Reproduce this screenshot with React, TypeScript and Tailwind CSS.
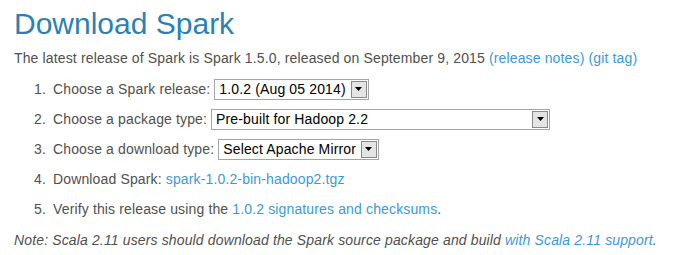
const Select = ({ value, width }: { value: string; width?: string }) => {
  return (
    <div
      className={`ml-[4px] flex h-[21px] items-center justify-between border border-[#a5a5a5] bg-white pl-[4px] pr-[1px] text-[14px] text-black ${width ?? ""}`}
    >
      <span className="mr-[5px] whitespace-nowrap leading-none">{value}</span>
      <span className="flex h-[17px] w-[16px] items-center justify-center border border-[#8a8a8a] bg-[#e4e4e4]">
        <svg width="7" height="4" viewBox="0 0 7 4">
          <path d="M0 0h7L3.5 4z" fill="#000" />
        </svg>
      </span>
    </div>
  );
};

const Link = ({ children }: { children: React.ReactNode }) => (
  <a href="#" className="text-[#3a9ad9]">
    {children}
  </a>
);

const App = () => {
  const steps: { n: string; content: React.ReactNode }[] = [
    {
      n: "1.",
      content: (
        <>
          <span>Choose a Spark release:</span>
          <Select value="1.0.2 (Aug 05 2014)" />
        </>
      ),
    },
    {
      n: "2.",
      content: (
        <>
          <span>Choose a package type:</span>
          <Select value="Pre-built for Hadoop 2.2" width="w-[339px]" />
        </>
      ),
    },
    {
      n: "3.",
      content: (
        <>
          <span>Choose a download type:</span>
          <Select value="Select Apache Mirror" />
        </>
      ),
    },
    {
      n: "4.",
      content: (
        <span>
          Download Spark: <Link>spark-1.0.2-bin-hadoop2.tgz</Link>
        </span>
      ),
    },
    {
      n: "5.",
      content: (
        <span>
          Verify this release using the <Link>1.0.2 signatures and checksums</Link>.
        </span>
      ),
    },
  ];

  return (
    <div className="min-h-screen bg-white px-[14px] pt-[7px] font-['Liberation_Sans',Arial,sans-serif] text-[14px] leading-[20px] tracking-[0.14px] text-[#505050]">
      {/** Heading **/}
      <h1 className="text-[30px] leading-[33px] tracking-normal text-[#2d7fb5]">Download Spark</h1>

      <p className="mt-[8px] whitespace-nowrap">
        The latest release of Spark is Spark 1.5.0, released on September 9, 2015{" "}
        <Link>(release notes)</Link> <Link>(git tag)</Link>
      </p>

      {/** Steps **/}
      <ol className="mt-[6px] pl-[20px]">
        {steps.map((step) => (
          <li key={step.n} className="flex h-[30px] items-center">
            <span className="w-[19px]">{step.n}</span>
            {step.content}
          </li>
        ))}
      </ol>

      <p className="mt-[6px] whitespace-nowrap italic">
        Note: Scala 2.11 users should download the Spark source package and build{" "}
        <Link>with Scala 2.11 support</Link>.
      </p>
    </div>
  );
};

export default App;
